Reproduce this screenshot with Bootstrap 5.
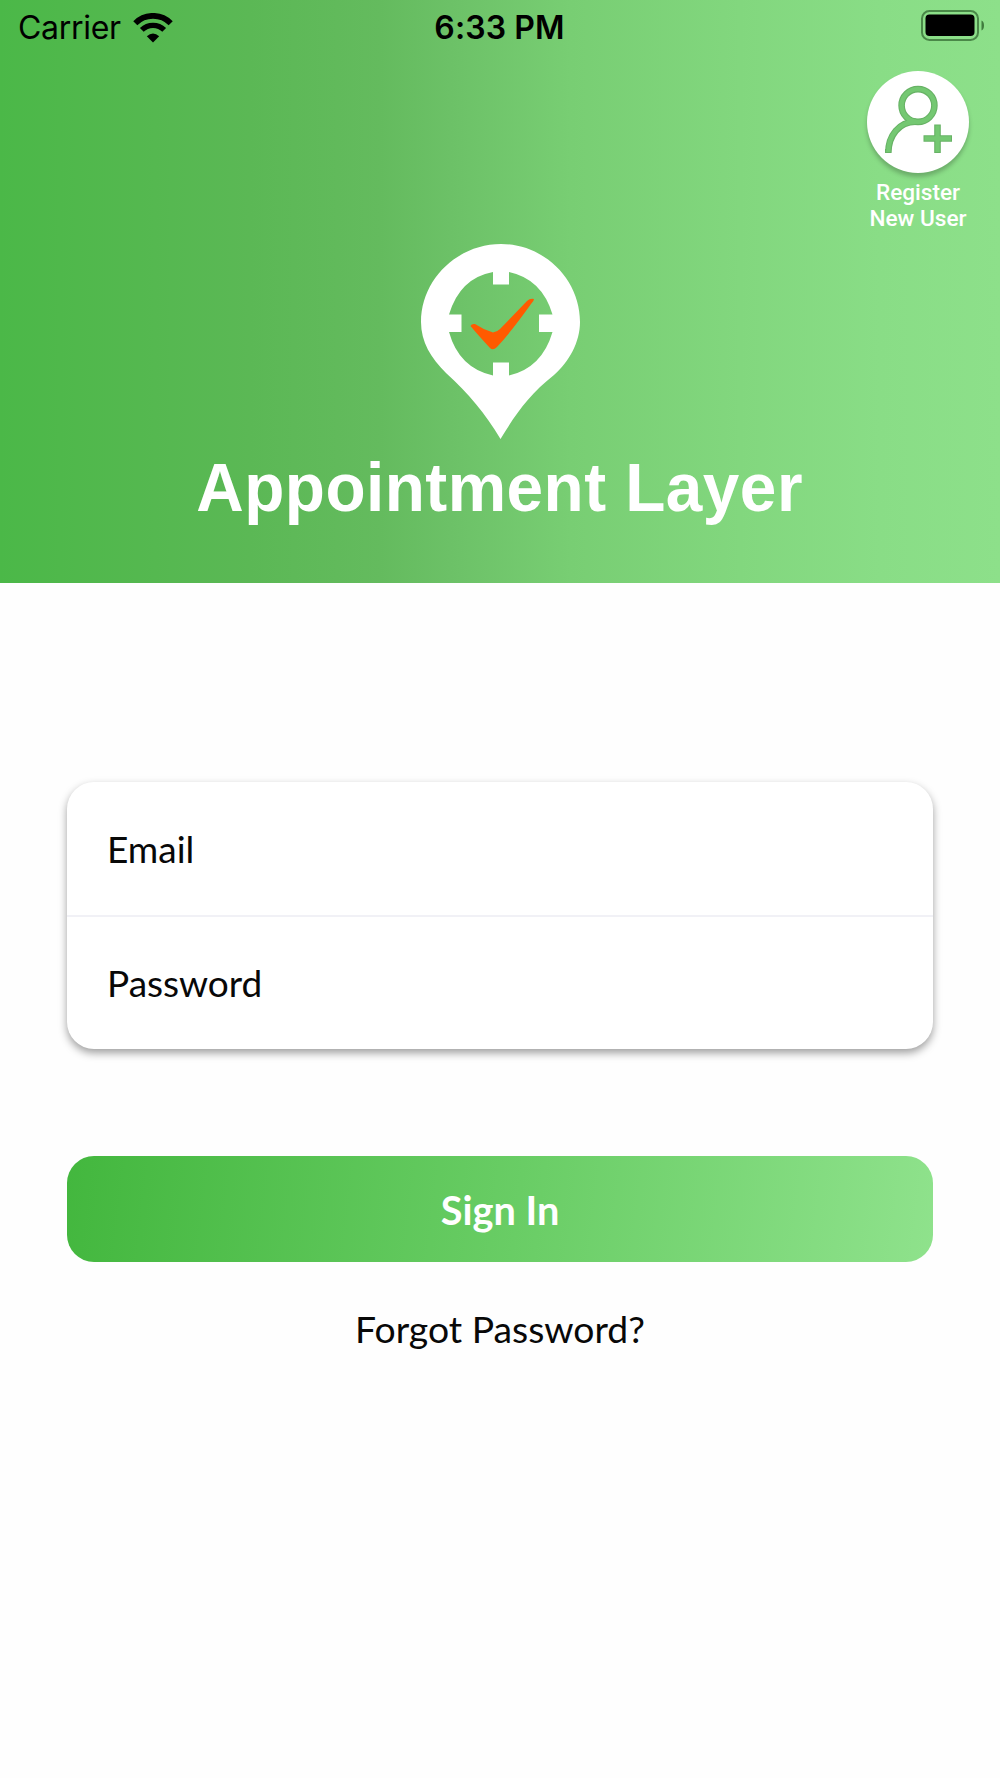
<!DOCTYPE html>
<html lang="en">
<head>
<meta charset="utf-8">
<meta name="viewport" content="width=device-width, initial-scale=1">
<title>Appointment Layer</title>
<link href="https://cdn.jsdelivr.net/npm/bootstrap@5.3.0/dist/css/bootstrap.min.css" rel="stylesheet">
<style>
body { font-family: Lato, sans-serif; color: #080808; }
.screen { height: 1778px; background: #fefefe; }
.hero { height: 583px; background: linear-gradient(90deg, #4bb848 0%, #4fb84b 6%, #5bb855 25%, #64bb5e 38%, #6cc167 45%, #78ce73 57%, #82d77e 74%, #89dd86 88%, #8de08a 100%); }
.status { height: 56px; padding: 0 15px 0 18px; font-family: Inter, sans-serif; font-size: 32px; line-height: 56px; color: #000; }
.carrier { letter-spacing: -.3px; }
.wifi { margin-left: 12px; }
.clock { font-weight: 600; font-size: 32px; letter-spacing: .1px; padding-right: 4px; }
.register { width: 104px; margin-right: 30px; margin-top: 15px; color: #fff; font: 500 22.6px/26px Roboto, sans-serif; }
.register svg { display: block; overflow: visible; filter: drop-shadow(0 4px 2px rgba(0,0,0,.22)); }
.register span { margin-top: 7px; }
.logo-block { padding-top: 188px; }
.pin { display: block; margin-left: 1px; }
.brand-name { margin-top: 8px; font: bold 69px/80px "Liberation Sans", sans-serif; letter-spacing: .5px; white-space: nowrap; transform: scaleX(.952); }
.form-area { padding: 199px 67px 0; }
.fields { border-radius: 27px; background: #fff; box-shadow: 0 4px 8px rgba(0,0,0,.38); }
.field-row { height: 133px; padding: 0 40px 1px; font-size: 37px; border: 0; background: transparent; color: #080808; box-shadow: none !important; }
.field-row::placeholder { color: #080808; opacity: 1; }
.field-row + .field-row { border-top: 2px solid #f1f1f6; height: 134px; border-radius: 0; padding-bottom: 2px; }
.btn-sign { margin-top: 107px; height: 106px; padding: 8px 0 6px; border: 0; border-radius: 27px; font-size: 39.700px; font-weight: 700; color: #fff; background: linear-gradient(97deg, #43b73e, #69cd65 52%, #8fe28c); }
.forgot { margin-top: 44px; font-size: 37.300px; line-height: 46px; color: #080808; }
</style>
<script src="https://cdn.jsdelivr.net/npm/bootstrap@5.3.0/dist/js/bootstrap.bundle.min.js"></script>
</head>
<body>
<main class="screen overflow-hidden">
  <header class="hero position-relative">
    <div class="status row g-0">
      <div class="col d-flex align-items-center">
        <span class="carrier">Carrier</span>
        <svg class="wifi" width="40" height="30" viewBox="0 0 40 30" fill="none" stroke="#000">
          <path d="M2.300 10.200A25 25 0 0 1 37.700 10.200" stroke-width="5.800"/>
          <path d="M8.800 16.900A16 16 0 0 1 31.200 16.900" stroke-width="5.400"/>
          <path d="M13.800 23.300Q20 17.500 26.200 23.300L20 29.500Z" fill="#000" stroke="none"/>
        </svg>
      </div>
      <div class="col-auto clock">6:33 PM</div>
      <div class="col d-flex align-items-center justify-content-end pb-1">
        <svg width="64" height="32" viewBox="0 0 64 32">
          <rect x="1" y="1" width="56" height="29" rx="7.500" fill="none" stroke="#4a8848" stroke-width="2"/>
          <rect x="4.500" y="4.500" width="49" height="21.500" rx="4" fill="#000"/>
          <path d="M60.500 10.500Q63 11.500 63 15.500T60.500 20.500Z" fill="#3f7b3d"/>
        </svg>
      </div>
    </div>
    <a href="#" class="register position-absolute end-0 d-flex flex-column align-items-center text-center text-decoration-none">
      <svg width="102" height="102" viewBox="0 0 102 102" fill="none">
        <circle cx="51" cy="51" r="51" fill="#fff"/>
        <g stroke="#67b265" stroke-width="6.600">
          <circle cx="51" cy="34.500" r="16.400"/>
          <path d="M21.300 82C21.300 65 32 50.500 49 50.800M21.300 78V82M70.500 53.500V82M56.500 67.500H85"/>
        </g>
        <g stroke="#74c872" stroke-width="4.400">
          <circle cx="51" cy="34.500" r="16.400"/>
          <path d="M21.300 81C21.300 65 32 50.500 49 50.800M70.500 54.500V81M57.500 67.500H84"/>
        </g>
      </svg>
      <span>Register<br>New User</span>
    </a>
    <div class="d-flex flex-column align-items-center text-white logo-block">
      <svg class="pin" width="160" height="196" viewBox="0 0 160 196">
        <path fill="#fff" fill-rule="evenodd" d="M80 0C123 0 159 35 159 78C159 98 148 118 133 131C108 151 96 168 79.500 195C64 169 48 150 25 129C10 114 0 98 0 78C0 35 37 0 80 0ZM72 28Q39 34 28 70.500H40.500V88H28Q38 124 72 131.500V118.500H88V131.500Q121 124 131.500 88H118V70.500H131.500Q121 35 88 28V40.500H72Z"/>
        <path fill="#ff5a00" d="M49.500 82Q50.500 79.500 54 80Q63 86 72 88.500Q76 88 79 85L106 57Q109 54 113 55Q113 57 110 60Q90 88 76 103Q72 107 69 104Q57 91 49.500 82Z"/>
      </svg>
      <h1 class="brand-name mb-0">Appointment Layer</h1>
    </div>
  </header>
  <form class="form-area d-flex flex-column">
    <div class="fields d-flex flex-column">
      <input class="form-control field-row" type="email" placeholder="Email" aria-label="Email">
      <input class="form-control field-row" type="password" placeholder="Password" aria-label="Password">
    </div>
    <button type="button" class="btn btn-sign w-100">Sign In</button>
    <a href="#" class="forgot align-self-center text-decoration-none">Forgot Password?</a>
  </form>
</main>
</body>
</html>
